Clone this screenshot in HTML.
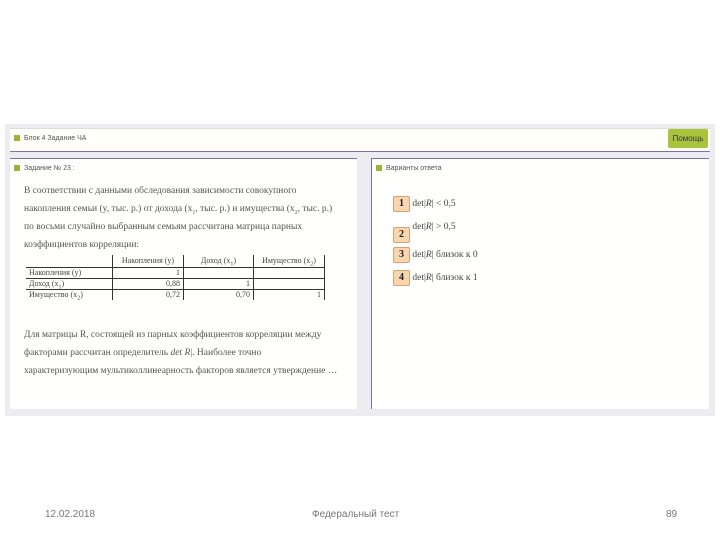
<!DOCTYPE html>
<html><head><meta charset="utf-8"><style>
body{margin:0;width:720px;height:540px;background:#fff;position:relative;overflow:hidden;font-family:"Liberation Serif",serif;color:#333}
.shot{position:absolute;left:5px;top:124px;width:710px;height:292px;background:#ececf1}
.bar{position:absolute;left:10px;top:128px;width:700px;height:22px;background:#fffef8;border-bottom:1px solid #7a72b0;border-top:1px solid #ddd}
.sq{display:inline-block;width:6px;height:6px;background:#9ab33a;margin-right:4px;vertical-align:middle}
.sm{font-family:"Liberation Sans",sans-serif;font-size:7px;color:#555}
.btn{position:absolute;left:668px;top:129px;width:40px;height:19px;background:#a9c43a;border-radius:2px;font-family:"Liberation Sans",sans-serif;font-size:8px;line-height:19px;text-align:center;color:#334}
.pan{position:absolute;background:#fffffe;border-top:1px solid #7a72b0}
.p{position:absolute;font-size:9.5px;line-height:18px;white-space:nowrap;color:#555}
sub{font-size:6px;line-height:0}
table{position:absolute;left:26px;top:255px;border-collapse:collapse;font-size:8px;color:#444}
td{padding:0 3px;height:10px;line-height:10px;border-right:1px solid #333}
.num{display:inline-block;width:15px;height:14px;background:#fad6b0;border:1px solid #d9a070;border-radius:2px;font-weight:bold;font-size:10px;text-align:center;line-height:14px;color:#222}
.opt{position:absolute;left:393px;font-size:9.5px;color:#444}
.ft{position:absolute;top:509px;font-family:"Liberation Sans",sans-serif;font-size:10px;color:#777}
</style></head><body>
<div class="shot"></div>
<div class="bar"><span class="sm" style="position:absolute;left:4px;top:6px"><span class="sq"></span>Блок 4 Задание ЧА</span></div>
<div class="btn">Помощь</div>
<div class="pan" style="left:10px;top:158px;width:347px;height:250px"><span class="sm" style="position:absolute;left:4px;top:6px"><span class="sq"></span>Задание № 23 :</span></div>
<div class="pan" style="left:371px;top:158px;width:337px;height:250px;border-left:1px solid #7a72b0"><span class="sm" style="position:absolute;left:4px;top:6px"><span class="sq"></span>Варианты ответа</span></div>
<div class="p" style="left:24px;top:182px">В соответствии с данными обследования зависимости совокупного<br>накопления семьи (y, тыс. р.) от дохода (x<sub>1</sub>, тыс. р.) и имущества (x<sub>2</sub>, тыс. р.)<br>по восьми случайно выбранным семьям рассчитана матрица парных<br>коэффициентов корреляции:</div>
<table>
<tr style="border-bottom:1px solid #333"><td style="width:80px;height:12px;border-right:1px solid #333"></td><td style="width:64px;text-align:center">Накопления (y)</td><td style="width:63px;text-align:center">Доход (x<sub>1</sub>)</td><td style="width:64px;text-align:center">Имущество (x<sub>2</sub>)</td></tr>
<tr style="border-bottom:1px solid #333"><td>Накопления (y)</td><td style="text-align:right">1</td><td></td><td></td></tr>
<tr style="border-bottom:1px solid #333"><td>Доход (x<sub>1</sub>)</td><td style="text-align:right">0,88</td><td style="text-align:right">1</td><td></td></tr>
<tr><td>Имущество (x<sub>2</sub>)</td><td style="text-align:right">0,72</td><td style="text-align:right">0,70</td><td style="text-align:right">1</td></tr>
</table>
<div class="p" style="left:24px;top:326px">Для матрицы R, состоящей из парных коэффициентов корреляции между<br>факторами рассчитан определитель <i>det R</i>|. Наиболее точно<br>характеризующим мультиколлинеарность факторов является утверждение …</div>
<div class="opt" style="top:196px"><span class="num">1</span> det|<i>R</i>| &lt; 0,5</div>
<div class="opt" style="top:222px"><span class="num" style="vertical-align:-8px">2</span> det|<i>R</i>| &gt; 0,5</div>
<div class="opt" style="top:247px"><span class="num">3</span> det|<i>R</i>| близок к 0</div>
<div class="opt" style="top:270px"><span class="num">4</span> det|<i>R</i>| близок к 1</div>
<div class="ft" style="left:45px">12.02.2018</div>
<div class="ft" style="left:312px">Федеральный тест</div>
<div class="ft" style="left:666px">89</div>
</body></html>
